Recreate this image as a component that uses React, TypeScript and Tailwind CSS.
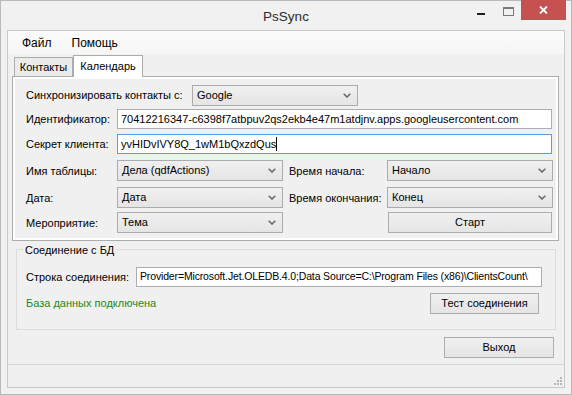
import clsx from "clsx"

const Chevron = () => (
  <svg width="8" height="5" viewBox="0 0 8 5" className="shrink-0">
    <path d="M0.7 0.7 L4 4 L7.3 0.7" stroke="#6a6a6a" strokeWidth="1.6" fill="none" />
  </svg>
)

type BoxProps = { value: string; className?: string }

const Combo = ({ value, className }: BoxProps) => (
  <div
    className={clsx(
      "flex items-center justify-between h-[21px] border border-[#acacac] bg-gradient-to-b from-[#f0f0f0] to-[#e5e5e5] pl-[4px] pr-[6px]",
      className
    )}
  >
    <span>{value}</span>
    <Chevron />
  </div>
)

const TextBox = ({ value, className }: BoxProps) => (
  <div
    className={clsx(
      "flex items-center h-[20px] border border-[#abadb3] bg-white pl-[3px] overflow-hidden whitespace-nowrap",
      className
    )}
  >
    {value}
  </div>
)

const Button = ({ value, className }: BoxProps) => (
  <div
    className={clsx(
      "flex items-center justify-center h-[21px] border border-[#adadad] bg-gradient-to-b from-[#f0f0f0] to-[#e5e5e5]",
      className
    )}
  >
    {value}
  </div>
)

const Grip = () => (
  <svg width="8" height="8" viewBox="0 0 8 8">
    {[
      [6, 0],
      [6, 3],
      [3, 3],
      [6, 6],
      [3, 6],
      [0, 6],
    ].map(([x, y]) => (
      <rect key={`${x}-${y}`} x={x} y={y} width="2" height="2" fill="#b8b8b8" />
    ))}
  </svg>
)

export default function App() {
  return (
    <div className="w-[572px] h-[395px] border border-[#b9b9b9] bg-[#f1f1f1] flex flex-col text-[11px] text-black font-['Liberation_Sans',sans-serif] whitespace-nowrap">
      {/* title bar */}
      <div className="h-[29px] shrink-0 relative flex justify-center items-center">
        <span className="text-[13.5px] text-[#2b2b2b] mt-[3px]">PsSync</span>
        <div className="absolute right-[5px] top-0 flex items-start">
          <div className="w-[8px] h-[2px] bg-[#1e1e1e] mt-[12px] mr-[18px]" />
          <div className="w-[11px] h-[9px] border border-[#7a7a7a] border-t-2 mt-[6px] mr-[7px]" />
          <div className="w-[45px] h-[20px] bg-[#c75050] flex items-center justify-center -mt-px">
            <svg width="9" height="8" viewBox="0 0 9 8">
              <path d="M1 0.5 L8 7.5 M8 0.5 L1 7.5" stroke="white" strokeWidth="1.8" />
            </svg>
          </div>
        </div>
      </div>

      {/* client area */}
      <div className="flex-1 ml-[6px] mr-[6px] mb-[6px] border border-[#c9c9c9] bg-[#f0f0f0] flex flex-col">
        {/* menu */}
        <div className="h-[23px] shrink-0 bg-gradient-to-b from-[#fbfbfb] to-[#f6f6f6] flex items-center pl-[14px] gap-[20px] text-[12px]">
          <span>Файл</span>
          <span>Помощь</span>
        </div>

        {/* tabs */}
        <div className="mx-[4px] flex items-end h-[22px] shrink-0">
          <div className="ml-[2px] w-[59px] h-[19px] border border-b-0 border-[#acacac] bg-[#ebebeb] flex items-center justify-center">
            Контакты
          </div>
          <div className="w-[70px] h-[22px] -mb-px border border-b-0 border-[#acacac] bg-white flex items-center justify-center relative z-10">
            Календарь
          </div>
        </div>
        <div className="mx-[4px] mr-[5px] h-[165px] shrink-0 border border-[#acacac] bg-white p-[2px]">
          <div className="h-full bg-[#f0f0f0] pl-[11px] pt-[6px] flex flex-col">
            <div className="flex items-center h-[21px]">
              <span className="w-[166px]">Синхронизировать контакты с:</span>
              <Combo value="Google" className="w-[166px]" />
            </div>
            <div className="flex items-center h-[20px] mt-[3px]">
              <span className="w-[91px]">Идентификатор:</span>
              <TextBox value="70412216347-c6398f7atbpuv2qs2ekb4e47m1atdjnv.apps.googleusercontent.com" className="w-[435px]" />
            </div>
            <div className="flex items-center h-[20px] mt-[5px]">
              <span className="w-[91px]">Секрет клиента:</span>
              <div className="flex items-center w-[435px] h-[20px] border border-[#569de5] bg-white pl-[3px]">
                <span>yvHIDvIVY8Q_1wM1bQxzdQus</span>
                <span className="w-px h-[14px] bg-black" />
              </div>
            </div>
            <div className="flex mt-[6px]">
              <div className="flex flex-col">
                <div className="flex items-start h-[21px]">
                  <span className="w-[91px] pt-[3px]">Имя таблицы:</span>
                  <Combo value="Дела (qdfActions)" className="w-[166px]" />
                </div>
                <div className="flex items-start h-[21px] mt-[6px]">
                  <span className="w-[91px] pt-[3px]">Дата:</span>
                  <Combo value="Дата" className="w-[166px]" />
                </div>
                <div className="flex items-start h-[21px] mt-[4px]">
                  <span className="w-[91px] pt-[3px]">Мероприятие:</span>
                  <Combo value="Тема" className="w-[166px]" />
                </div>
              </div>
              <div className="flex flex-col ml-[6px]">
                <div className="flex items-start h-[21px]">
                  <span className="w-[98px] pt-[3px]">Время начала:</span>
                  <Combo value="Начало" className="w-[166px]" />
                </div>
                <div className="flex items-start h-[21px] mt-[6px]">
                  <span className="w-[98px] pt-[3px]">Время окончания:</span>
                  <Combo value="Конец" className="w-[166px]" />
                </div>
                <div className="flex items-start h-[21px] mt-[4px]">
                  <span className="w-[99px]" />
                  <Button value="Старт" className="w-[164px]" />
                </div>
              </div>
            </div>
          </div>
        </div>

        {/* db group */}
        <div className="mx-[8px] mt-[8px] h-[81px] shrink-0 relative border border-[#dcdcdc] pt-[17px] pl-[9px]">
          <span className="absolute -top-[8px] left-[6px] px-[2px] bg-[#f0f0f0]">Соединение с БД</span>
          <div className="flex items-center">
            <span className="w-[110px]">Строка соединения:</span>
            <TextBox
              value="Provider=Microsoft.Jet.OLEDB.4.0;Data Source=C:\Program Files (x86)\ClientsCount\"
              className="w-[406px] h-[19px] text-[10.5px] tracking-[-0.15px]"
            />
          </div>
          <div className="flex items-center justify-between mt-[6px] pr-[16px]">
            <span className="text-[#1b8a1b]">База данных подключена</span>
            <Button value="Тест соединения" className="w-[109px]" />
          </div>
        </div>

        <div className="flex justify-end mr-[10px] mt-[7px] shrink-0">
          <Button value="Выход" className="w-[110px]" />
        </div>

        <div className="flex-1 mt-[6px] border-t border-[#d7d7d7] flex items-end justify-end pr-[2px] pb-[2px]">
          <Grip />
        </div>
      </div>
    </div>
  )
}
